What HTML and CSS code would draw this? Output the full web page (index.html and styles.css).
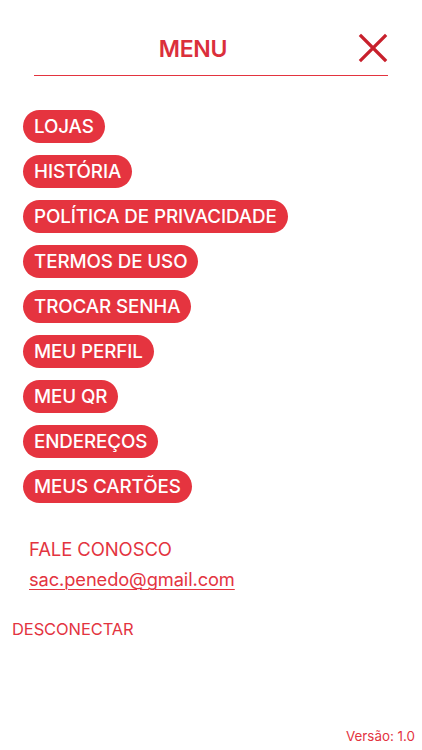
FILE: index.html
```html
<!DOCTYPE html>
<html lang="pt">
<head>
    <meta charset="UTF-8">
    <meta name="viewport" content="width=device-width, initial-scale=1.0">
    <title>Menu</title>
    <link rel="stylesheet" href="styles.css">
</head>
<body>
    <!-- Header -->
    <div class="header">
        <h1 class="title">MENU</h1>
        <button class="close" aria-label="Fechar">
            <svg width="30" height="30" viewBox="0 0 30 30">
                <path d="M3 3 L27 27 M27 3 L3 27" stroke="#c8202c" stroke-width="3.2" stroke-linecap="square" fill="none"/>
            </svg>
        </button>
    </div>

    <!-- Menu items -->
    <ul class="menu">
        <li><a class="pill" href="#">LOJAS</a></li>
        <li><a class="pill" href="#">HISTÓRIA</a></li>
        <li><a class="pill" href="#">POLÍTICA DE PRIVACIDADE</a></li>
        <li><a class="pill" href="#">TERMOS DE USO</a></li>
        <li><a class="pill" href="#">TROCAR SENHA</a></li>
        <li><a class="pill" href="#">MEU PERFIL</a></li>
        <li><a class="pill" href="#">MEU QR</a></li>
        <li><a class="pill" href="#">ENDEREÇOS</a></li>
        <li><a class="pill" href="#">MEUS CARTÕES</a></li>
    </ul>

    <div class="contact">
        <p class="contact-title">FALE CONOSCO</p>
        <a class="email" href="#">sac.penedo@gmail.com</a>
    </div>

    <a class="logout" href="#">DESCONECTAR</a>

    <div class="version">Versão: 1.0</div>
</body>
</html>
```
FILE: styles.css
```css
html, body { margin: 0; padding: 0; }
body { font-family: Inter, "Noto Sans", sans-serif; background: #fff; color: #e3343f; width: 422px; height: 750px; display: flex; flex-direction: column; }
.header { position: relative; margin: 0 34px; height: 75px; border-bottom: 1px solid #e3343f; display: flex; align-items: flex-end; justify-content: center; }
.title { margin: 0 36px 13px 0; font-size: 23px; line-height: 26px; font-weight: 600; color: #db2f3b; letter-spacing: -0.3px; }
.close { position: absolute; right: 0; top: 33px; padding: 0; border: none; background: none; width: 30px; height: 30px; }
.menu { list-style: none; margin: 34px 0 0 0; padding: 0 0 0 23px; display: flex; flex-direction: column; gap: 12px; }
.menu li { display: flex; }
.pill { display: inline-block; background: #e5343f; color: #fff; text-decoration: none; font-size: 18.8px; font-weight: 500; line-height: 33px; height: 33px; padding: 0 11px; border-radius: 17px; letter-spacing: -0.1px; }
.contact { margin: 33px 0 0 29px; }
.contact-title { margin: 0; font-size: 18.5px; line-height: 26px; letter-spacing: -0.1px; }
.email { display: inline-block; margin-top: 4px; color: #e3343f; font-size: 18.3px; line-height: 26px; letter-spacing: -0.1px; text-decoration: underline; text-underline-offset: 3px; text-decoration-thickness: 1px; }
.logout { display: block; margin: 27px 0 0 12px; color: #e3343f; text-decoration: none; font-size: 16.5px; line-height: 20px; letter-spacing: -0.1px; }
.version { margin-top: auto; margin-bottom: 6px; align-self: flex-end; padding-right: 7px; font-size: 13.4px; line-height: 16px; }
```
